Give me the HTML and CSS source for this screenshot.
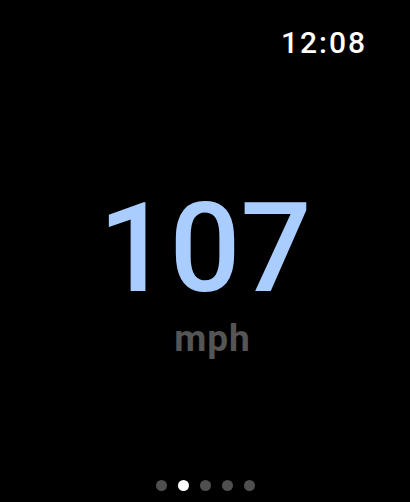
FILE: index.html
```html
<!DOCTYPE html>
<html lang="en">
<head>
    <meta charset="UTF-8">
    <title>Speed</title>
    <link rel="stylesheet" href="styles.css">
</head>
<body>
    <div class="screen">
        <div class="status-bar">
            <span class="clock">12:08</span>
        </div>

        <div class="speed">
            <div class="speed-value">107</div>
            <div class="speed-unit">mph</div>
        </div>

        <div class="pager">
            <span class="dot"></span>
            <span class="dot active"></span>
            <span class="dot"></span>
            <span class="dot"></span>
            <span class="dot"></span>
        </div>
    </div>
</body>
</html>
```
FILE: styles.css
```css
html, body {
    margin: 0;
    padding: 0;
    background-color: #000;
}

body {
    font-family: Roboto, "Liberation Sans", Arial, sans-serif;
}

.screen {
    width: 410px;
    height: 502px;
    display: flex;
    flex-direction: column;
}

.status-bar {
    display: flex;
    justify-content: flex-end;
    padding: 28px 43px 0 0;
}

.clock {
    color: #fff;
    font-weight: 500;
    font-size: 30px;
    line-height: 30px;
    letter-spacing: 2px;
}

.speed {
    display: flex;
    flex-direction: column;
    align-items: center;
    margin-top: 128px;
}

.speed-value {
    color: #a8cdfe;
    font-weight: 500;
    font-size: 125px;
    line-height: 125px;
}

.speed-unit {
    color: #555;
    font-weight: bold;
    font-size: 37px;
    line-height: 43px;
    letter-spacing: 1px;
    margin-top: 6px;
    margin-left: 15px;
}

.pager {
    display: flex;
    justify-content: center;
    gap: 11px;
    margin-top: auto;
    margin-bottom: 11px;
}

.dot {
    width: 11px;
    height: 11px;
    border-radius: 50%;
    background-color: #4f4f4f;
}

.dot.active {
    background-color: #fff;
}
```
